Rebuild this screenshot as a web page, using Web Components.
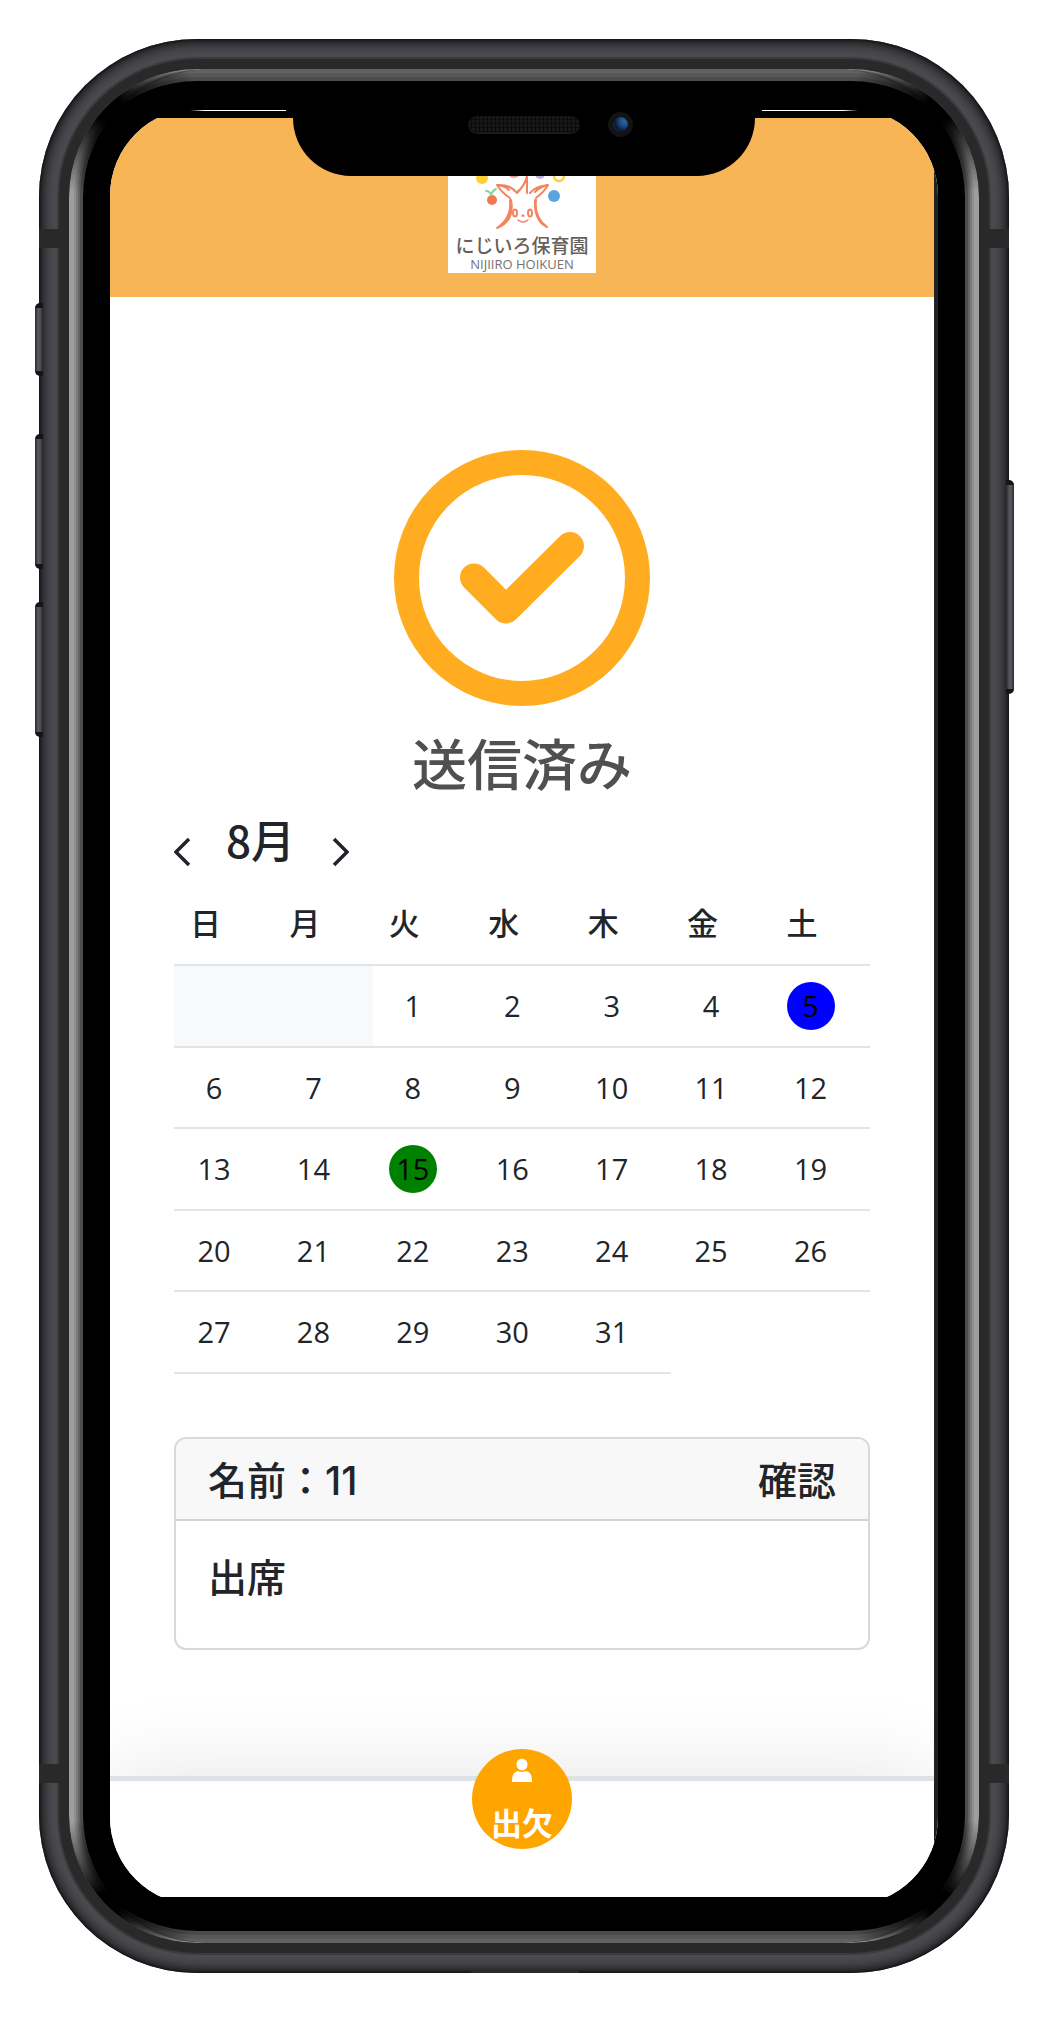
<!DOCTYPE html>
<html lang="ja">
<head>
<meta charset="utf-8">
<meta name="viewport" content="width=device-width, initial-scale=1">
<title>にじいろ保育園</title>
<style>
  body { margin: 0; padding: 39px 39px 52px; background: #fff; color: #212529;
    font-family: "Open Sans", "Noto Sans CJK JP", sans-serif; }
</style>
</head>
<body>
<phone-frame>
  <app-header><nursery-logo></nursery-logo></app-header>
  <main>
    <sent-status>送信済み</sent-status>
    <month-calendar month="8" days="31" offset="2" blue="5" green="15"></month-calendar>
    <attendance-card>
      <span slot="name">名前：11</span>
      <span slot="action">確認</span>
      <span slot="state">出席</span>
    </attendance-card>
  </main>
  <tab-bar>出欠</tab-bar>
</phone-frame>

<script>
const define = (name, html, setup) => customElements.define(name, class extends HTMLElement {
  constructor() {
    super();
    this.attachShadow({ mode: 'open' }).innerHTML = html;
  }
  connectedCallback() { if (setup) setup(this, this.shadowRoot); }
});

define('phone-frame', `
<style>
  :host { display: block; position: relative; }
  * { box-sizing: border-box; }
  .metal { position: relative; padding: 20px; border-radius: 158px; background: #4c4b50;
    box-shadow: inset 0 0 3px #000, inset 0 0 13px 3px #0b0b0d; }
  .rim { padding: 10px; border-radius: 138px; background: #29292a; box-shadow: 0 0 0 2px #3b3b3e; }
  .bezel { position: relative; padding: 49px 41px 46px; border-radius: 128px; background: #000; }
  .bezel::before { content: ""; position: absolute; inset: 0; border-radius: 128px;
    box-shadow:
      inset 5px 0 #9e9e9e, inset -5px 0 #9e9e9e, inset 7px 0 #8e8e8e, inset -7px 0 #8e8e8e,
      inset 9px 0 #7a7a7a, inset -9px 0 #7a7a7a, inset 11px 0 #646464, inset -11px 0 #646464,
      inset 14px 0 #4c4c4c, inset -14px 0 #4c4c4c,
      inset 0 4px #626262, inset 0 -4px #626262, inset 0 8px #585858, inset 0 -8px #585858,
      inset 0 12px #4b4b4b, inset 0 -12px #4b4b4b;
    mask:
      radial-gradient(circle at 36px 36px, transparent 14px, #000 92px),
      radial-gradient(circle at calc(100% - 36px) 36px, transparent 14px, #000 92px),
      radial-gradient(circle at 36px calc(100% - 36px), transparent 14px, #000 92px),
      radial-gradient(circle at calc(100% - 36px) calc(100% - 36px), transparent 14px, #000 92px);
    mask-composite: intersect; }
  .screen { position: relative; background: #fff; border-right: 4px solid #202122;
    clip-path: inset(-10px 0 -8px 0 round 88px); }
  .notch { position: absolute; top: 32px; left: 50%; width: 668px; height: 75px; margin-left: -334px; }
  .notch .cut { position: absolute; inset: 0 103px; background: #000; border-radius: 0 0 58px 58px; }
  .line { position: absolute; top: 9px; width: 96px; height: 1px; background: linear-gradient(90deg, transparent, #fff 15%); }
  .line.a { left: 0; } .line.b { right: 0; transform: scaleX(-1); }
  .speaker { position: absolute; top: 15px; left: 278px; width: 112px; height: 18px; border-radius: 9px;
    border-bottom: 2px solid #1a1a1a;
    background: repeating-linear-gradient(90deg, transparent 0 3px, #0a0a0a 3px 4px), repeating-linear-gradient(#171717 0 3px, #0c0c0c 3px 4px); }
  .camera { position: absolute; top: 11px; left: 418px; width: 25px; height: 25px; border-radius: 50%;
    border: 5px solid #131313; background: radial-gradient(circle at 75% 30%, #2767a8 0, #1c4c84 30%, #0a1834 62%, #173a68 100%); }
  .band { position: absolute; width: 20px; height: 19px; background: #29292a; }
  .l { left: 0; } .r { right: 0; } .t { top: 190px; } .b { bottom: 190px; }
  .key { position: absolute; width: 8px; border-radius: 5px 0 0 5px; border: solid #151517; border-width: 5px 0;
    background: linear-gradient(90deg, #2a2a2e, #5a5b61 40%, #47474c 75%, #222); left: -4px; }
  .k1 { top: 264px; height: 73px; } .k2 { top: 395px; height: 135px; } .k3 { top: 563px; height: 135px; }
  .k4 { left: auto; right: -5px; top: 441px; height: 214px; transform: scaleX(-1); }
  .port { position: absolute; bottom: 0; left: 432px; width: 108px; height: 3px; border-radius: 8px 8px 0 0; background: #2c2b2a; }
</style>
<div class="metal">
  <div class="rim"><div class="bezel"><div class="screen"><slot></slot></div>
    <div class="notch"><i class="line a"></i><i class="line b"></i><i class="cut"></i><i class="speaker"></i><i class="camera"></i></div>
  </div></div>
  <i class="band l t"></i><i class="band r t"></i><i class="band l b"></i><i class="band r b"></i>
  <i class="key k1"></i><i class="key k2"></i><i class="key k3"></i><i class="key k4"></i><i class="port"></i>
</div>`);

define('app-header', `
<style>
  :host { display: flex; justify-content: center; padding: 7px 0 24px; background: #f7b556; }
</style><slot></slot>`);

define('nursery-logo', `
<style>
  :host { display: flex; flex-direction: column; align-items: center; width: 148px; height: 148px; background: #fff; color: #675f5b; white-space: nowrap; }
  svg { display: block; flex: none; }
  .jp { font: 500 19px/24px "Noto Sans CJK JP", sans-serif; }
  .en { font: 13px/14px "Open Sans", sans-serif; color: #77706d; }
</style>
<svg width="148" height="108" viewBox="0 0 148 108" fill="none" stroke-linecap="round" stroke-linejoin="round" aria-hidden="true">
  <circle cx="34" cy="53" r="6" fill="#ffd032"/><circle cx="66" cy="46" r="7" fill="#f29a9a"/>
  <circle cx="92" cy="49" r="5" fill="#b9addb"/><circle cx="111" cy="51" r="5" stroke="#ffd032" stroke-width="2.5"/>
  <circle cx="106" cy="71" r="6" fill="#5aa5e0"/><circle cx="44" cy="75" r="5" fill="#f07a50"/>
  <path d="M38 66q4 0 5 4q1-4 5-6" stroke="#93cfa2" stroke-width="2"/>
  <g stroke="#f28560" stroke-width="2">
    <path d="M69 68Q62 59 49 60Q54 68 62 73M50 60Q57 61 61 65M69 68Q77 60 79 51V68M79 52Q76 62 70 66M82 68Q88 61 100 60Q96 67 88 73M99 60Q92 62 87 67"/>
    <path d="M62 75Q64 93 49 103Q67 96 63 75M87 75Q86 96 99 102Q86 92 88 75" fill="#f28560"/>
    <ellipse cx="67" cy="88" rx="2" ry="3.500"/><ellipse cx="82" cy="88" rx="2" ry="3.500"/>
    <path d="M70 95q5 4 10 0M74 91l1-1l1 1" stroke-width="1.500"/>
  </g>
</svg>
<span class="jp">にじいろ保育園</span><span class="en">NIJIIRO HOIKUEN</span>`);

define('sent-status', `
<style>
  :host { display: flex; flex-direction: column; align-items: center; gap: 24px; padding-top: 153px; }
  svg { width: 256px; height: 256px; display: block; }
  h1 { margin: 0; font: 500 55px/62px "Noto Sans CJK JP", sans-serif; color: #505050; }
</style>
<svg viewBox="0 0 256 256" fill="none" stroke="#ffac20" aria-hidden="true">
  <circle cx="128" cy="128" r="115.500" stroke-width="25"/>
  <path d="M80 127.500L112 159.500L176 96" stroke-width="28" stroke-linecap="round" stroke-linejoin="round"/>
</svg>
<h1><slot></slot></h1>`);

define('month-calendar', `
<style>
  :host { display: block; margin: 20px 64px 0; }
  .nav { display: flex; align-items: flex-end; gap: 32px; padding-bottom: 16px; }
  h2 { margin: 0; padding: 0 2px 2px 0; font: 500 44px/54px "Noto Sans CJK JP", sans-serif; }
  button { border: 0; background: none; padding: 0; height: 32px; color: inherit; }
  svg { display: block; }
  table { width: 100%; table-layout: fixed; border-spacing: 0; }
  th, td { box-sizing: border-box; height: 82px; padding: 0 16px; text-align: left; border-bottom: 2px solid #e1e5e9; }
  tbody tr:nth-child(even) td { height: 81px; }
  th { padding-bottom: 4px; font: 500 31px/48px "Noto Sans CJK JP", sans-serif; }
  td { font-size: 29px; line-height: 48px; }
  td.pad { background: #f8f9fb; }
  td.none { border: 0; }
  span { display: block; width: 48px; height: 48px; border-radius: 50%; text-align: center; }
  .blue { background: #00f; color: #000; } .green { background: #008000; color: #000; }
</style>
<div class="nav">
  <button aria-label="前の月"><svg width="20" height="32" viewBox="0 0 20 32" fill="none" stroke="currentColor" stroke-width="3.500"><path d="M15 3L2 16L15 29"/></svg></button>
  <h2></h2>
  <button aria-label="次の月"><svg width="20" height="32" viewBox="0 0 20 32" fill="none" stroke="currentColor" stroke-width="3.500"><path d="M5 3L18 16L5 29"/></svg></button>
</div>
<table><thead><tr></tr></thead><tbody></tbody></table>`, (host, root) => {
  const num = n => Number(host.getAttribute(n));
  root.querySelector('h2').textContent = num('month') + '月';
  root.querySelector('thead tr').innerHTML = [...'日月火水木金土'].map(d => `<th scope="col">${d}</th>`).join('');
  let html = '';
  for (let day = 1 - num('offset'); day <= num('days'); day += 7) {
    html += '<tr>';
    for (let d = day; d < day + 7; d++) {
      const mark = d === num('blue') ? 'blue' : d === num('green') ? 'green' : '';
      html += d < 1 ? '<td class="pad"></td>' : d > num('days') ? '<td class="none"></td>'
        : `<td><span class="${mark}">${d}</span></td>`;
    }
    html += '</tr>';
  }
  root.querySelector('tbody').innerHTML = html;
});

define('attendance-card', `
<style>
  :host { display: block; margin: 63px 64px 126px; border: 2px solid #d9d9d9; border-radius: 12px; overflow: hidden;
    font: 500 39px/44px Inter, "Noto Sans CJK JP", sans-serif; }
  header { display: flex; justify-content: space-between; padding: 20px 32px 16px; background: #f8f8f8; border-bottom: 2px solid #d4d4d4; }
  .body { padding: 35px 32px 48px; }
</style>
<header><slot name="name"></slot><slot name="action"></slot></header>
<div class="body"><slot name="state"></slot></div>`);

define('tab-bar', `
<style>
  :host { display: flex; justify-content: center; height: 116px; border-top: 5px solid #dee2e6; background: #fff;
    box-shadow: 0 0 90px rgba(0, 0, 0, .11); }
  button { display: flex; flex-direction: column; align-items: center; justify-content: space-between; width: 100px; height: 100px;
    margin-top: -32px; padding: 9px 0 6px; border: 0; border-radius: 50%; background: orange; color: #fff;
    font: 700 31px/42px "Noto Sans CJK JP", sans-serif; }
  svg { display: block; }
</style>
<button><svg width="20" height="24" viewBox="0 0 20 24" fill="currentColor" aria-hidden="true"><ellipse cx="10" cy="6.500" rx="5.500" ry="6"/><path d="M0 24v-2q0-8 6-9q4 2 8 0q6 1 6 9v2z"/></svg><slot></slot></button>`);
</script>
</body>
</html>
